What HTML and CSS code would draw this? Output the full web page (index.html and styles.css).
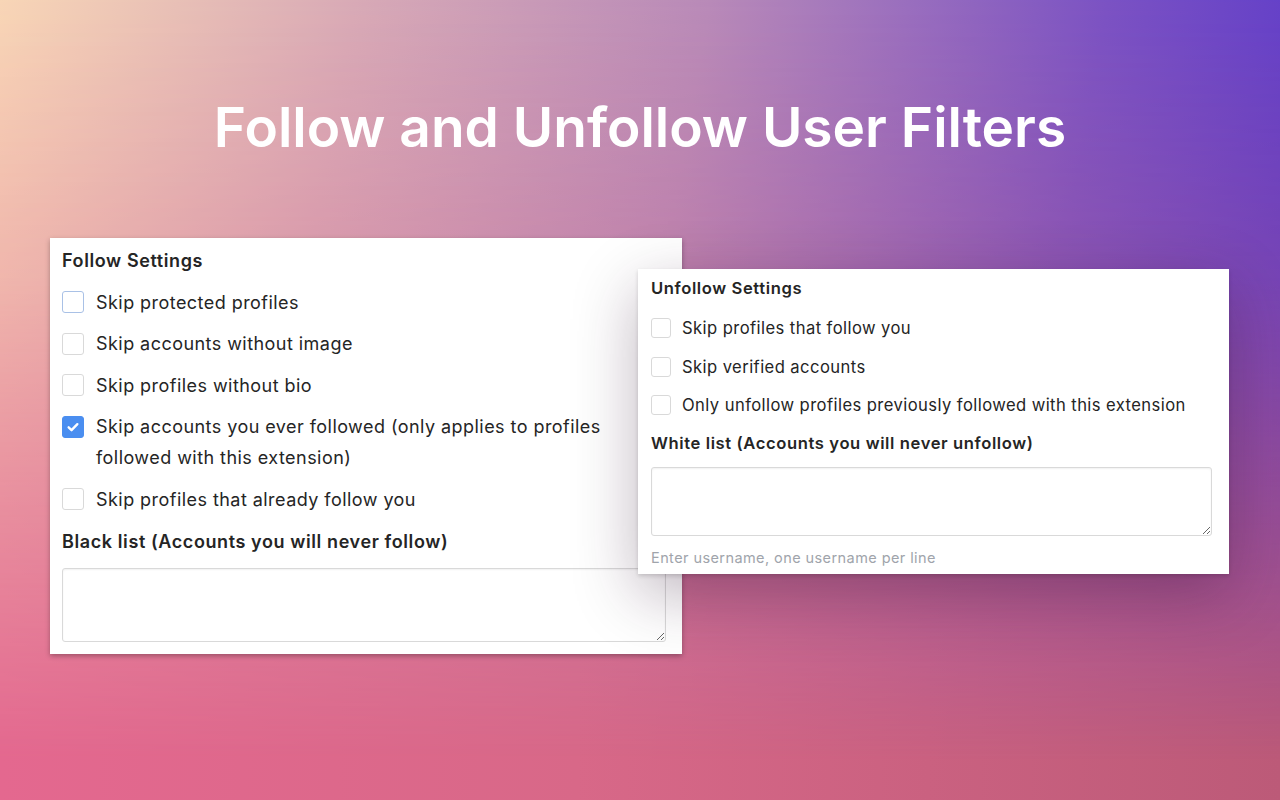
FILE: index.html
```html
<!DOCTYPE html>
<html lang="en">

<head>
  <meta charset="UTF-8" />
  <title>Follow and Unfollow User Filters</title>
  <link rel="stylesheet" href="styles.css">
</head>

<body>
  <h1 class="title">Follow and Unfollow User Filters</h1>

  <div class="stage">
    <div class="panel panel-follow">
      <div class="panel-heading">Follow Settings</div>
      <label class="option">
        <input type="checkbox" class="check check-focus" />
        <span>Skip protected profiles</span>
      </label>
      <label class="option">
        <input type="checkbox" class="check" />
        <span>Skip accounts without image</span>
      </label>
      <label class="option">
        <input type="checkbox" class="check" />
        <span>Skip profiles without bio</span>
      </label>
      <label class="option">
        <input type="checkbox" class="check" checked />
        <span>Skip accounts you ever followed (only applies to profiles followed with this extension)</span>
      </label>
      <label class="option">
        <input type="checkbox" class="check" />
        <span>Skip profiles that already follow you</span>
      </label>
      <div class="panel-heading">Black list (Accounts you will never follow)</div>
      <textarea class="list-input"></textarea>
    </div>

    <div class="panel panel-unfollow">
      <div class="panel-heading">Unfollow Settings</div>
      <label class="option">
        <input type="checkbox" class="check" />
        <span>Skip profiles that follow you</span>
      </label>
      <label class="option">
        <input type="checkbox" class="check" />
        <span>Skip verified accounts</span>
      </label>
      <label class="option">
        <input type="checkbox" class="check" />
        <span>Only unfollow profiles previously followed with this extension</span>
      </label>
      <div class="panel-heading">White list (Accounts you will never unfollow)</div>
      <textarea class="list-input"></textarea>
      <div class="hint">Enter username, one username per line</div>
    </div>
  </div>
</body>

</html>
```

FILE: styles.css
```css
:root {
  --text: #252525;
  --muted: #a0a4ab;
  --border: #d9d9d9;
  --blue: #4a8ef0;
}

* {
  box-sizing: border-box;
  margin: 0;
  padding: 0;
}

body {
  position: relative;
  width: 1280px;
  height: 800px;
  overflow: hidden;
  font-family: 'Inter', 'Liberation Sans', sans-serif;
  color: var(--text);
  background: linear-gradient(to right, #e4688f 0%, #d86888 45%, #bc5a78 100%);
}

/* top half of the backdrop: peach to violet, fading into the pink below */
body::before {
  content: '';
  position: absolute;
  inset: 0;
  z-index: -1;
  background: linear-gradient(100deg, #f8d6b6 0%, #d8aab6 25%, #b88ab8 50%, #7a52c4 78%, #5434cc 100%);
  -webkit-mask-image: linear-gradient(to bottom, #000 0%, rgba(0, 0, 0, 0.75) 35%, rgba(0, 0, 0, 0) 95%);
  mask-image: linear-gradient(to bottom, #000 0%, rgba(0, 0, 0, 0.75) 35%, rgba(0, 0, 0, 0) 95%);
}

.title {
  padding-top: 94px;
  text-align: center;
  font-size: 55px;
  font-weight: 600;
  line-height: 66px;
  color: #fff;
}

.stage {
  display: flex;
  align-items: flex-start;
  padding: 78px 0 0 50px;
}

.panel {
  background: #fff;
  display: flex;
  flex-direction: column;
}

.panel-follow {
  width: 632px;
  padding: 7px 16px 12px 12px;
  gap: 10.6px;
  font-size: 18px;
  line-height: 31px;
  letter-spacing: 0.45px;
  box-shadow: 0 2px 5px rgba(0, 0, 0, 0.3);
}

.panel-unfollow {
  position: relative;
  width: 591px;
  margin: 31px 0 0 -44px;
  padding: 5px 17px 5px 13px;
  gap: 9.8px;
  font-size: 16.6px;
  line-height: 28.5px;
  letter-spacing: 0.42px;
  box-shadow: 0 20px 60px rgba(40, 10, 40, 0.3), 0 2px 4px rgba(0, 0, 0, 0.15);
}

.panel-heading {
  font-weight: 600;
  letter-spacing: 0.6px;
}

.panel-unfollow .panel-heading:first-child {
  margin-bottom: 2px;
}

.option {
  display: flex;
  align-items: flex-start;
  gap: 12px;
}

.panel-unfollow .option {
  gap: 11px;
}

.check {
  appearance: none;
  flex: none;
  width: 22px;
  height: 22px;
  margin-top: 4.5px;
  border: 1px solid var(--border);
  border-radius: 3px;
  background: #fff;
}

.panel-unfollow .check {
  width: 20px;
  height: 20px;
  margin-top: 4.2px;
}

.check-focus {
  border-color: #a9c1e6;
}

.check:checked {
  border-color: var(--blue);
  background: var(--blue) url("data:image/svg+xml,%3Csvg xmlns='http://www.w3.org/2000/svg' viewBox='0 0 22 22'%3E%3Cpath d='M6.2 11.4l3.2 3.1 6.4-6.6' fill='none' stroke='white' stroke-width='2.6' stroke-linecap='round' stroke-linejoin='round'/%3E%3C/svg%3E") center / 100% no-repeat;
}

.list-input {
  display: block;
  width: 100%;
  height: 74px;
  border: 1px solid var(--border);
  border-radius: 3px;
  box-shadow: inset 0 1px 2px rgba(0, 0, 0, 0.06);
  resize: vertical;
  font: inherit;
}

.panel-follow .list-input {
  margin-top: 1px;
}

.panel-unfollow .list-input {
  height: 69px;
}

.hint {
  margin-top: 1px;
  font-size: 14.5px;
  line-height: 22px;
  color: var(--muted);
}
```
